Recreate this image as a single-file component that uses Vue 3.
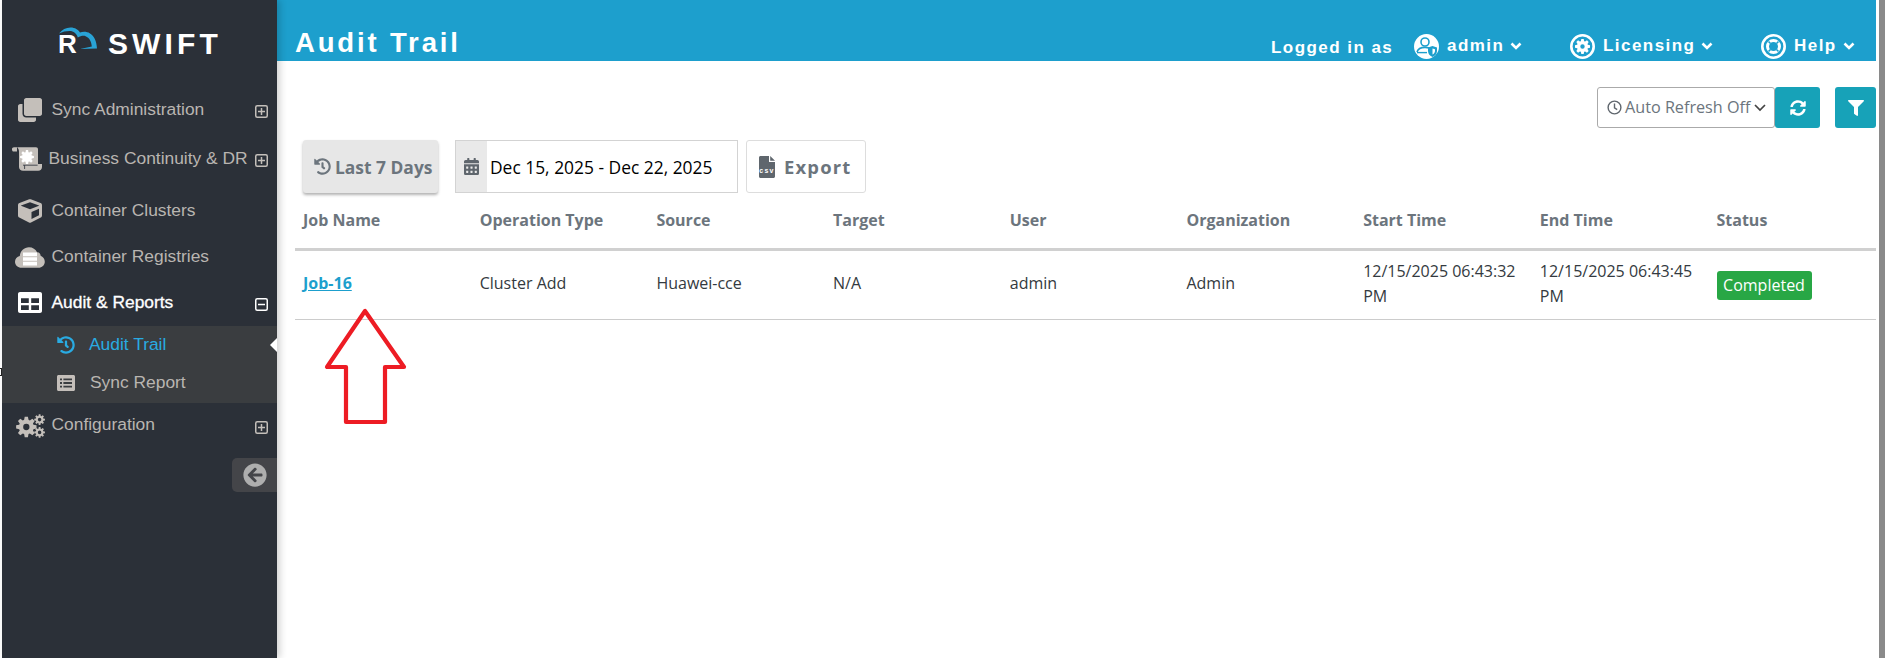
<script setup>
function gear(cx, cy, ro, ri, teeth, hole) {
  const pts = []
  const step = (Math.PI * 2) / teeth
  for (let i = 0; i < teeth; i++) {
    const a = i * step
    const w = step * 0.2
    const seq = [[ri, a - step / 2 + w * 0.6], [ro, a - w], [ro, a + w], [ri, a + step / 2 - w * 0.6]]
    for (const [r, t] of seq) pts.push(`${(cx + r * Math.cos(t)).toFixed(2)} ${(cy + r * Math.sin(t)).toFixed(2)}`)
  }
  let d = 'M' + pts.join('L') + 'Z'
  if (hole) d += `M${cx - hole} ${cy}a${hole} ${hole} 0 1 0 ${hole * 2} 0a${hole} ${hole} 0 1 0 ${-hole * 2} 0Z`
  return d
}
const cogBig = gear(10.5, 13, 10.5, 7.6, 8, 3.2)
const cogA = gear(24, 5.5, 5.5, 3.9, 8, 1.8)
const cogB = gear(24, 18.5, 5.5, 3.9, 8, 1.8)
const cogWhite = gear(15, 10, 7, 5, 8, 0)
const licGear = gear(12.5, 12.5, 7.6, 5.6, 8, 2.2)

const clone = 'M464 0c26.51 0 48 21.49 48 48v288c0 26.51-21.49 48-48 48H176c-26.51 0-48-21.49-48-48V48c0-26.51 21.49-48 48-48h288M176 416c-44.112 0-80-35.888-80-80V128H48c-26.51 0-48 21.49-48 48v288c0 26.51 21.49 48 48 48h288c26.51 0 48-21.49 48-48v-48H176z'
const cube = 'M239.1 6.3l-208 78c-18.7 7-31.1 25-31.1 45v225.1c0 18.2 10.3 34.8 26.5 42.9l208 104c13.5 6.8 29.4 6.8 42.9 0l208-104c16.3-8.1 26.5-24.8 26.5-42.9V129.3c0-20-12.4-37.9-31.1-44.9l-208-78C262 2.2 250 2.2 239.1 6.3zM256 68.4l192 72v1.1l-192 78-192-78v-1.1l192-72zm32 356V275.5l160-65v133.9l-160 80z'
const history = 'M504 255.531c.253 136.64-111.18 248.372-247.82 248.468-59.015.042-113.223-20.53-155.822-54.911-11.077-8.94-11.905-25.541-1.839-35.607l11.267-11.267c8.609-8.609 22.353-9.551 31.891-1.984C173.062 425.135 212.781 440 256 440c101.705 0 184-82.311 184-184 0-101.705-82.311-184-184-184-48.814 0-93.149 18.969-126.068 49.932l50.754 50.754c10.08 10.08 2.941 27.314-11.313 27.314H24c-8.837 0-16-7.163-16-16V38.627c0-14.254 17.234-21.393 27.314-11.314l49.372 49.372C129.209 34.136 189.552 8 256 8c136.81 0 247.747 110.78 248 247.531zm-180.912 78.784l9.823-12.63c8.138-10.463 6.253-25.542-4.21-33.679L288 256.349V152c0-13.255-10.745-24-24-24h-16c-13.255 0-24 10.745-24 24v135.651l65.409 50.874c10.463 8.137 25.541 6.253 33.679-4.21z'
const sync = 'M370.72 133.28C339.458 104.008 298.888 87.962 255.848 88c-77.458.068-144.328 53.178-162.791 126.85-1.344 5.363-6.122 9.15-11.651 9.15H24.103c-7.498 0-13.194-6.807-11.807-14.176C33.933 94.924 134.813 8 256 8c66.448 0 126.791 26.136 171.315 68.685L463.03 40.97C478.149 25.851 504 36.559 504 57.941V192c0 13.255-10.745 24-24 24H345.941c-21.382 0-32.09-25.851-16.971-40.971l41.75-41.749zM32 296h134.059c21.382 0 32.09 25.851 16.971 40.971l-41.75 41.75c31.262 29.273 71.835 45.319 114.876 45.28 77.418-.07 144.315-53.144 162.787-126.849 1.344-5.363 6.122-9.15 11.651-9.15h57.304c7.498 0 13.194 6.807 11.807 14.176C478.067 417.076 377.187 504 256 504c-66.448 0-126.791-26.136-171.315-68.685L48.97 471.03C33.851 486.149 8 475.441 8 454.059V320c0-13.255 10.745-24 24-24z'
const filter = 'M487.976 0H24.028C2.71 0-8.047 25.866 7.058 40.971L192 225.941V432c0 7.831 3.821 15.17 10.237 19.662l80 55.98C298.02 518.69 320 507.493 320 487.98V225.941l184.947-184.97C520.021 25.896 509.338 0 487.976 0z'
const calendar = 'M0 464c0 26.5 21.5 48 48 48h352c26.5 0 48-21.5 48-48V192H0v272zm320-196c0-6.6 5.4-12 12-12h40c6.6 0 12 5.4 12 12v40c0 6.6-5.4 12-12 12h-40c-6.6 0-12-5.4-12-12v-40zm0 128c0-6.6 5.4-12 12-12h40c6.6 0 12 5.4 12 12v40c0 6.6-5.4 12-12 12h-40c-6.6 0-12-5.4-12-12v-40zM192 268c0-6.6 5.4-12 12-12h40c6.6 0 12 5.4 12 12v40c0 6.6-5.4 12-12 12h-40c-6.6 0-12-5.4-12-12v-40zm0 128c0-6.6 5.4-12 12-12h40c6.6 0 12 5.4 12 12v40c0 6.6-5.4 12-12 12h-40c-6.6 0-12-5.4-12-12v-40zM64 268c0-6.6 5.4-12 12-12h40c6.6 0 12 5.4 12 12v40c0 6.6-5.4 12-12 12H76c-6.6 0-12-5.4-12-12v-40zm0 128c0-6.6 5.4-12 12-12h40c6.6 0 12 5.4 12 12v40c0 6.6-5.4 12-12 12H76c-6.6 0-12-5.4-12-12v-40zM400 64h-48V16c0-8.8-7.2-16-16-16h-32c-8.8 0-16 7.2-16 16v48H160V16c0-8.8-7.2-16-16-16h-32c-8.8 0-16 7.2-16 16v48H48C21.5 64 0 85.5 0 112v48h448v-48c0-26.5-21.5-48-48-48z'
const arrowLeft = 'M256 504C119 504 8 393 8 256S119 8 256 8s248 111 248 248-111 248-248 248zm28.9-143.6L209.4 288H392c13.3 0 24-10.7 24-24v-16c0-13.3-10.7-24-24-24H209.4l75.5-72.4c9.7-9.3 9.9-24.8.4-34.3l-11-10.9c-9.4-9.4-24.6-9.4-33.9 0L107.7 239c-9.4 9.4-9.4 24.6 0 33.9l132.7 132.7c9.4 9.4 24.6 9.4 33.9 0l11-11c9.4-9.6 9.2-25.1-.4-34.3z'

const columns = ['Job Name', 'Operation Type', 'Source', 'Target', 'User', 'Organization', 'Start Time', 'End Time', 'Status']
</script>

<template>
  <div class="page">
    <aside class="side">
      <div class="logo">
        <div class="logo-mark">
          <span class="logo-r">R</span>
          <svg class="logo-cloud" width="40" height="23" viewBox="0 0 40 23" fill="none">
            <path d="M1 6.6C4 2.6 8 .4 12.5 .4C17 .4 20.4 2.6 22 5.6C25 4.4 29 4.6 32 6.4C36 8.8 38.6 13.4 39 21.6L22 22L33.8 19.4C33.4 14.6 31.4 10.6 27.6 9.2C25.4 8.4 22.4 9 19.8 10.6C18.6 6.4 15.6 4 11.6 4C8 4 4.4 4.8 1 6.6Z" fill="#29a3d6" />
          </svg>
        </div>
        <span class="logo-t">SWIFT</span>
      </div>

      <nav class="nav">
        <div class="row r1">
          <span class="ic"><svg width="24" height="24" viewBox="0 0 512 512"><path :d="clone" fill="#c4bfba" /></svg></span>
          <span class="lb">Sync Administration</span>
          <svg class="tog" width="13" height="13" viewBox="0 0 13 13"><rect x=".75" y=".75" width="11.5" height="11.5" rx="1.5" fill="none" stroke="#c4bfba" stroke-width="1.5" /><path d="M3 6.5h7M6.5 3v7" stroke="#c4bfba" stroke-width="1.5" /></svg>
        </div>
        <div class="row r2 biz">
          <span class="ic">
            <svg width="30" height="24" viewBox="0 0 30 24">
              <path d="M0 2.2C0 1 .8 .3 2 .3H5V4.6H1.6C.7 4.6 0 3.6 0 2.2Z" fill="#c4bfba" />
              <path d="M5 .3H24C25.2 .3 26 1.2 26 2.4V17H30V20C30 22.2 28.4 23.7 26.2 23.7H11C8.8 23.7 7 22.2 7 20V4.6C7 2.6 6.2 1 5 .3Z" fill="#c4bfba" />
              <path d="M11 18.2H25.6M12.6 18.2V22" stroke="#2b3038" stroke-width=".8" fill="none" />
              <path :d="cogWhite" fill="#fff" />
            </svg>
          </span>
          <span class="lb">Business Continuity &amp; DR</span>
          <svg class="tog" width="13" height="13" viewBox="0 0 13 13"><rect x=".75" y=".75" width="11.5" height="11.5" rx="1.5" fill="none" stroke="#c4bfba" stroke-width="1.5" /><path d="M3 6.5h7M6.5 3v7" stroke="#c4bfba" stroke-width="1.5" /></svg>
        </div>
        <div class="row r3">
          <span class="ic"><svg width="24" height="24" viewBox="0 0 512 512"><path :d="cube" fill="#c4bfba" /></svg></span>
          <span class="lb">Container Clusters</span>
        </div>
        <div class="row r4">
          <span class="ic">
            <svg width="30" height="21" viewBox="0 0 30 21">
              <path d="M6.6 20.8C2.8 20.8 0 18.2 0 14.8C0 11.8 2 9.6 4.8 9C5.2 4 9.2 .2 14 .2C17.6 .2 20.8 2.2 22.2 5.4C23 5.2 23.8 5.4 24.4 6C25.2 6.8 25.6 7.8 25.6 8.8C28 9.8 29.8 12 29.8 14.8C29.8 18.2 27 20.8 23.4 20.8Z" fill="#c4bfba" />
              <path d="M8 5.6H22V9.2H8ZM8 10.2H22V13.8H8ZM8 14.8H22V18.4H8Z" fill="#fff" />
            </svg>
          </span>
          <span class="lb">Container Registries</span>
        </div>
        <div class="row r5 on">
          <span class="ic">
            <svg width="24" height="21" viewBox="0 0 24 21"><path fill-rule="evenodd" d="M2 0H22C23.1 0 24 .9 24 2V19C24 20.1 23.1 21 22 21H2C.9 21 0 20.1 0 19V2C0 .9 .9 0 2 0ZM3 6.2V11H10.8V6.2ZM13.2 6.2V11H21V6.2ZM3 13.2V18H10.8V13.2ZM13.2 13.2V18H21V13.2Z" fill="#fff" /></svg>
          </span>
          <span class="lb">Audit &amp; Reports</span>
          <svg class="tog" width="13" height="13" viewBox="0 0 13 13"><rect x=".75" y=".75" width="11.5" height="11.5" rx="1.5" fill="none" stroke="#fff" stroke-width="1.5" /><path d="M3 6.5h7" stroke="#fff" stroke-width="1.5" /></svg>
        </div>
        <div class="sub">
          <div class="subrow cur">
            <svg width="18" height="18" viewBox="0 0 512 512"><path :d="history" fill="#29abe2" /></svg>
            <span>Audit Trail</span>
            <i class="notch"></i>
          </div>
          <div class="subrow">
            <svg width="18" height="16" viewBox="0 0 18 16"><path fill-rule="evenodd" d="M1.5 0H16.5C17.3 0 18 .7 18 1.5V14.5C18 15.3 17.3 16 16.5 16H1.5C.7 16 0 15.3 0 14.5V1.5C0 .7 .7 0 1.5 0ZM3 3.4V5.2H5V3.4ZM6.4 3.4V5.2H15V3.4ZM3 7.1V8.9H5V7.1ZM6.4 7.1V8.9H15V7.1ZM3 10.8V12.6H5V10.8ZM6.4 10.8V12.6H15V10.8Z" fill="#c4bfba" /></svg>
            <span>Sync Report</span>
          </div>
        </div>
        <div class="row r7">
          <span class="ic">
            <svg width="29" height="24" viewBox="0 0 29.5 24"><path :d="cogBig" fill="#c4bfba" fill-rule="evenodd" /><path :d="cogA" fill="#c4bfba" fill-rule="evenodd" /><path :d="cogB" fill="#c4bfba" fill-rule="evenodd" /></svg>
          </span>
          <span class="lb">Configuration</span>
          <svg class="tog" width="13" height="13" viewBox="0 0 13 13"><rect x=".75" y=".75" width="11.5" height="11.5" rx="1.5" fill="none" stroke="#c4bfba" stroke-width="1.5" /><path d="M3 6.5h7M6.5 3v7" stroke="#c4bfba" stroke-width="1.5" /></svg>
        </div>
      </nav>
      <div class="collapse">
        <svg width="24" height="24" viewBox="0 0 512 512"><path :d="arrowLeft" fill="#aeaeae" /></svg>
      </div>
    </aside>
    <i class="speck"></i>

    <main class="main">
      <header class="top">
        <h1 class="title">Audit Trail</h1>
        <div class="menu">
          <span class="who">Logged in as</span>
          <span class="mi m-admin">
            <svg width="25" height="25" viewBox="0 0 25 25">
              <circle cx="12.5" cy="12.5" r="12.5" fill="#fff" />
              <circle cx="11" cy="8" r="4" fill="none" stroke="#1d9fcd" stroke-width="1.6" />
              <path d="M3 18C4 14.6 7 13.4 11 13.4C12.6 13.4 14 13.6 15 14" fill="none" stroke="#1d9fcd" stroke-width="1.6" />
              <path d="M3 18.6H13" stroke="#1d9fcd" stroke-width="1.4" />
              <path d="M14 13.6L18.5 12L23 13.6V17C23 20 21 22 18.5 23C16 22 14 20 14 17Z" fill="#1d9fcd" />
              <path d="M18.5 14.4L21 15.2V17C21 18.6 20 19.8 18.5 20.6Z" fill="#fff" />
            </svg>
            <b>admin</b>
            <svg class="chev" width="12" height="8" viewBox="0 0 12 8"><path d="M1.5 1.5L6 6L10.5 1.5" fill="none" stroke="#fff" stroke-width="2.6" /></svg>
          </span>
          <span class="mi m-lic">
            <svg width="25" height="25" viewBox="0 0 25 25">
              <circle cx="12.5" cy="12.5" r="11.2" fill="#1d9fcd" stroke="#fff" stroke-width="2.6" />
              <path :d="licGear" fill="#fff" fill-rule="evenodd" />
            </svg>
            <b>Licensing</b>
            <svg class="chev" width="12" height="8" viewBox="0 0 12 8"><path d="M1.5 1.5L6 6L10.5 1.5" fill="none" stroke="#fff" stroke-width="2.6" /></svg>
          </span>
          <span class="mi m-help">
            <svg width="25" height="25" viewBox="0 0 25 25">
              <circle cx="12.5" cy="12.5" r="11.2" fill="#1d9fcd" stroke="#fff" stroke-width="2.6" />
              <circle cx="12.5" cy="12.5" r="6" fill="none" stroke="#fff" stroke-width="3" />
              <path d="M7.5 7.5L9.5 9.5M17.5 7.5L15.5 9.5M7.5 17.5L9.5 15.5M17.5 17.5L15.5 15.5" stroke="#1d9fcd" stroke-width="1.6" />
            </svg>
            <b>Help</b>
            <svg class="chev" width="12" height="8" viewBox="0 0 12 8"><path d="M1.5 1.5L6 6L10.5 1.5" fill="none" stroke="#fff" stroke-width="2.6" /></svg>
          </span>
        </div>
      </header>

      <section class="bar1">
        <div class="sel">
          <svg width="15" height="15" viewBox="0 0 15 15"><circle cx="7.5" cy="7.5" r="6.4" fill="none" stroke="#5f666d" stroke-width="1.4" /><path d="M7.5 3.6V7.8L10.2 9.6" fill="none" stroke="#5f666d" stroke-width="1.4" /></svg>
          <span>Auto Refresh Off</span>
          <svg width="12" height="8" viewBox="0 0 12 8"><path d="M1 1L6 6L11 1" fill="none" stroke="#444" stroke-width="1.7" /></svg>
        </div>
        <button class="tbtn refresh"><svg width="16" height="16" viewBox="0 0 512 512"><path :d="sync" fill="#fff" /></svg></button>
        <button class="tbtn funnel"><svg width="16" height="16" viewBox="0 0 512 512"><path :d="filter" fill="#fff" /></svg></button>
      </section>

      <section class="bar2">
        <button class="b7">
          <svg width="17" height="17" viewBox="0 0 512 512"><path :d="history" fill="#6c757d" /></svg>
          <span>Last 7 Days</span>
        </button>
        <div class="range">
          <span class="addon"><svg width="15" height="19" viewBox="0 0 448 512"><path :d="calendar" fill="#5f666d" /></svg></span>
          <span class="rtxt">Dec 15, 2025 - Dec 22, 2025</span>
        </div>
        <button class="exp">
          <svg width="16" height="22" viewBox="0 0 16 22">
            <path d="M1.5 0H10V6H16V20.5C16 21.3 15.3 22 14.5 22H1.5C.7 22 0 21.3 0 20.5V1.5C0 .7 .7 0 1.5 0ZM11.2 0L16 4.8H11.2Z" fill="#5f666d" />
            <text x="8" y="17" text-anchor="middle" font-size="7" font-weight="700" fill="#fff" font-family="Liberation Sans, sans-serif">csv</text>
          </svg>
          <span>Export</span>
        </button>
      </section>

      <section class="tbl">
        <div class="thead">
          <div v-for="c in columns" :key="c" class="th">{{ c }}</div>
        </div>
        <div class="tr">
          <div class="td"><a class="job">Job-16</a></div>
          <div class="td">Cluster Add</div>
          <div class="td">Huawei-cce</div>
          <div class="td">N/A</div>
          <div class="td">admin</div>
          <div class="td">Admin</div>
          <div class="td">12/15/2025 06:43:32 PM</div>
          <div class="td">12/15/2025 06:43:45 PM</div>
          <div class="td td-badge"><span class="badge">Completed</span></div>
        </div>
      </section>
    </main>
    <div class="scroll"></div>

    <svg class="arrow" width="90" height="122" viewBox="320 305 90 122">
      <path d="M365 311L327 367H346V422H385V367H404Z" fill="none" stroke="#ed1c24" stroke-width="4.2" stroke-linejoin="round" />
    </svg>
  </div>
</template>

<style>
html, body { margin: 0; background: #fff; }
</style>

<style scoped>
.page { position: relative; display: flex; width: 1885px; height: 658px; overflow: hidden; background: #fff; font-family: "Open Sans", sans-serif; }

.side { position: relative; z-index: 2; flex: none; width: 275px; margin-left: 2px; background: #2b3038; box-shadow: 3px 0 7px rgba(0, 0, 0, .18); font-family: "Liberation Sans", sans-serif; }
.logo { display: flex; align-items: flex-end; height: 55px; padding-left: 56px; box-sizing: content-box; }
.logo-mark { position: relative; width: 50px; height: 27px; }
.logo-r { position: absolute; left: 0; bottom: -4px; color: #fff; font-size: 26px; font-weight: 700; line-height: 30px; }
.logo-cloud { position: absolute; left: 0; top: -1px; }
.logo-t { color: #fff; font-size: 30px; font-weight: 700; letter-spacing: 4.1px; line-height: 22px; height: 22px; }

.nav { margin-top: 31px; }
.row { display: flex; align-items: center; box-sizing: border-box; padding-right: 9px; color: #b9b5b1; font-size: 17.4px; }
.r1 { height: 48px; }
.r2 { height: 50px; }
.r3 { height: 54px; }
.r4 { height: 38px; }
.r5 { height: 50px; padding-top: 3px; }
.r7 { height: 47px; padding-bottom: 2px; }
.ic { flex: none; display: flex; justify-content: center; box-sizing: border-box; width: 50px; padding-left: 6px; }
.biz .ic { width: 47px; padding-left: 3px; }
.lb { white-space: nowrap; margin-top: -2px; margin-left: -0.5px; }
.tog { flex: none; margin-left: auto; margin-top: 3px; }
.r2 .tog { margin-top: 2px; }
.on { color: #fff; -webkit-text-stroke: .3px #fff; }
.on .lb { margin-top: 0; }

.sub { height: 77px; background: #3a3d40; }
.subrow { position: relative; display: flex; align-items: center; height: 38px; padding-left: 55px; color: #b9b5b1; font-size: 17.4px; }
.subrow span { margin: -2px 0 0 15px; }
.subrow.cur span { margin-left: 14px; }
.subrow.cur { color: #29abe2; }
.notch { position: absolute; right: 0; top: 12px; border-style: solid; border-width: 7px 7px 7px 0; border-color: transparent #fff transparent transparent; }

.collapse { display: flex; align-items: center; justify-content: center; width: 45px; height: 34px; margin: 8px 0 0 auto; background: #444549; border-radius: 5px 0 0 5px; }

.speck { position: absolute; left: 0; top: 368px; width: 2px; height: 8px; box-sizing: border-box; border: 1px solid #222; border-left: 0; }

.main { flex: none; width: 1599px; padding-right: 3px; box-sizing: content-box; }
.top { display: flex; align-items: flex-end; justify-content: space-between; height: 61px; background: #1d9fcd; box-sizing: border-box; font-family: "Liberation Sans", sans-serif; color: #fff; }
.title { margin: 0 0 3px 18px; font-size: 27.5px; line-height: 31px; font-weight: 700; letter-spacing: 2.85px; }
.menu { display: flex; align-items: flex-end; height: 27px; margin-bottom: 2px; font-size: 17px; letter-spacing: 1.45px; }
.who { font-weight: 700; width: 143px; line-height: 18px; margin-bottom: 2px; white-space: nowrap; }
.mi { display: flex; align-items: center; height: 25px; }
.mi b { margin-left: 8px; line-height: 18px; margin-bottom: 2px; }
.chev { margin-left: 6px; margin-bottom: 1px; }
.m-admin { width: 156px; }
.m-lic { width: 191px; }
.m-help { width: 115px; }

.bar1 { display: flex; justify-content: flex-end; margin-top: 26px; height: 41px; }
.sel { display: flex; align-items: center; box-sizing: border-box; width: 178px; height: 41px; padding-left: 9px; border: 1px solid #aaa; border-radius: 3px; color: #6c757d; font-size: 16.2px; }
.sel span { margin: -1px 4px 0 3px; white-space: nowrap; }
.tbtn { display: flex; align-items: center; justify-content: center; height: 41px; padding: 0; border: 0; border-radius: 3px; background: #17a2b8; }
.refresh { width: 45px; }
.funnel { width: 41px; margin-left: 15px; }

.bar2 { display: flex; margin-top: 12px; height: 53px; padding-left: 26px; }
.b7 { display: flex; align-items: center; gap: 4px; box-sizing: border-box; width: 135px; height: 53px; padding: 0 0 0 11px; border: 0; border-radius: 3px; background: #e7e7e7; box-shadow: 0 2px 3px rgba(0, 0, 0, .3); color: #6c757d; font-family: "Open Sans", sans-serif; font-size: 17.4px; font-weight: 700; white-space: nowrap; }
.range { display: flex; box-sizing: border-box; width: 283px; height: 53px; margin-left: 17px; border: 1px solid #d3d3d3; }
.addon { display: flex; align-items: center; justify-content: center; width: 31px; background: #e9e9e9; }
.rtxt { align-self: center; margin-left: 3px; color: #000; font-size: 17.4px; white-space: nowrap; }
.exp { display: flex; align-items: center; gap: 9px; box-sizing: border-box; width: 120px; height: 53px; margin-left: 8px; padding: 0 0 0 12px; border: 1px solid #ddd; border-radius: 3px; background: #fff; color: #6c757d; font-family: "Open Sans", sans-serif; font-size: 18.4px; font-weight: 700; letter-spacing: 1.2px; }

.tbl { margin-left: 18px; font-size: 16px; }
.thead, .tr { display: grid; grid-template-columns: repeat(8, 176.7px) 1fr; }
.thead { height: 58px; box-sizing: border-box; border-bottom: 3px solid #d0d0d0; }
.th { align-self: center; padding: 0 8px; color: #6c757d; font-weight: 700; white-space: nowrap; margin-top: -1px; }
.tr { height: 68px; box-sizing: content-box; border-bottom: 1px solid #ccc; }
.td { align-self: center; padding: 0 8px; color: #343a40; line-height: 25.5px; margin-top: -2px; }
.td-badge { margin-top: 0; }
.job { color: #1d9fcd; font-weight: 700; text-decoration: underline; }
.badge { display: block; box-sizing: border-box; width: 95px; height: 29px; line-height: 29px; text-align: center; border-radius: 3px; background: #28a745; color: #fff; font-size: 16px; }

.scroll { flex: none; width: 6px; height: 658px; margin-left: 0; background: #8a8a8a; }
.arrow { position: absolute; left: 320px; top: 305px; }
</style>
